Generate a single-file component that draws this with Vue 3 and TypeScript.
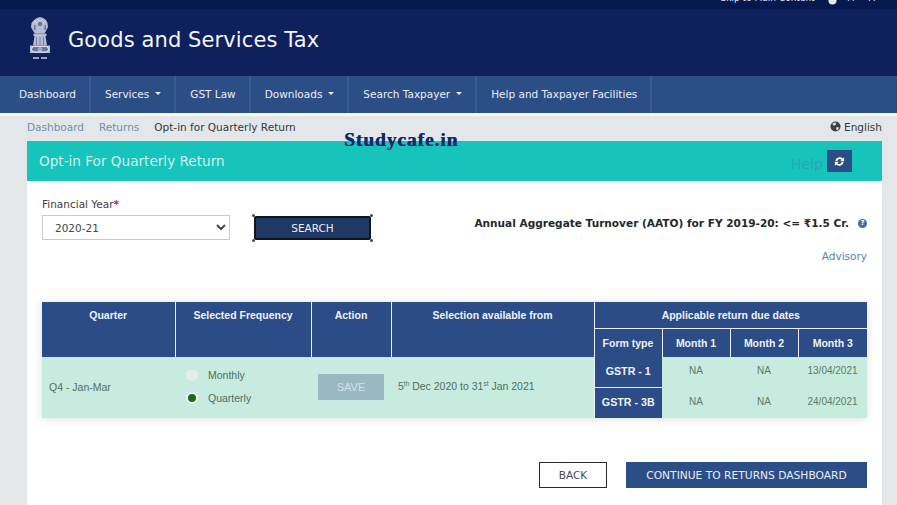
<template>
  <div class="page">
    <div class="topbar">
      <span class="skip">Skip to Main Content</span>
      <svg class="contrast" viewBox="0 0 10 10"><circle cx="5" cy="5" r="4.5" fill="#e8ecf4" /></svg>
      <span class="skip a-large">A</span>
      <span class="skip a-small">A</span>
    </div>

    <header class="masthead">
      <svg class="emblem" viewBox="0 0 22 43" aria-hidden="true">
        <g fill="#b4bdd2">
          <path d="M5 3 8 1l3-1 3 1 3 2 1.500 3 .5 4-1.500 3-2 3.500H6L3.500 13 2 10l.5-4z" />
          <path d="M4.500 16.500h13V19h-13z" />
          <path d="M5.500 19h11l1 6.500.5 3H4l.5-3z" />
          <path d="M1 28.500h20v7.500H1z" />
        </g>
        <g fill="#6a779c">
          <circle cx="11" cy="7" r="2.200" />
          <path d="M5 8h1.500v5H5zM15.500 8H17v5h-1.500z" />
          <path d="M7 20h.8v8H7zM10.600 20h.8v8h-.8zM14.200 20h.8v8h-.8z" />
          <rect x="3" y="30" width="16" height="4.500" rx="2" />
        </g>
        <g fill="none" stroke="#e3e7f0" stroke-width=".9">
          <rect x="2.500" y="29.500" width="17" height="5.500" rx="2.500" />
          <circle cx="11" cy="32.300" r="1.500" />
          <path d="M6 4l2 2M16 4l-2 2M9 2.500l1 1.500M13 2.500 12 4" />
        </g>
        <path d="M4 40h6v2H4zM12 40h6v2h-6z" fill="#98a4c0" />
      </svg>
      <span class="site-title">Goods and Services Tax</span>
    </header>

    <nav class="mainnav">
      <a v-for="item in navItems" :key="item.label" class="nav-item">
        {{ item.label }}<i v-if="item.caret" class="caret"></i>
      </a>
    </nav>

    <main class="content">
      <div class="crumbs">
        <div class="crumb-list">
          <a>Dashboard</a>
          <a>Returns</a>
          <span>Opt-in for Quarterly Return</span>
        </div>
        <div class="lang">
          <svg viewBox="0 0 12 12" width="11" height="11">
            <circle cx="6" cy="6" r="5.500" fill="#3a3f44" />
            <path d="M3 2.500 6 1.500 7 3.500 5 5 3 4.500zM7 6.500l3 .5-1.500 3-2-1z" fill="#d8dcdf" />
          </svg>
          <span>English</span>
        </div>
      </div>

      <section class="card">
        <div class="card-head">
          <h1>Opt-in For Quarterly Return</h1>
          <div class="head-tools">
            <span class="help">Help</span>
            <button class="refresh" type="button" aria-label="Refresh">
              <svg viewBox="0 0 12 12" width="11" height="11">
                <path d="M1.500 5.500a4.600 4.600 0 0 1 8-2.700L11 1.500v4.200H6.800L8.300 4.200a2.700 2.700 0 0 0-4.700 1.300zM10.500 6.500a4.600 4.600 0 0 1-8 2.700L1 10.500V6.300h4.200L3.700 7.800a2.700 2.700 0 0 0 4.700-1.300z" fill="#fff" />
              </svg>
            </button>
          </div>
        </div>

        <div class="card-body">
          <div class="filter-row">
            <div class="field">
              <label>Financial Year<b>*</b></label>
              <select class="year">
                <option>2020-21</option>
              </select>
            </div>
            <button class="search" type="button">
              <i class="hd tl"></i><i class="hd tr"></i><i class="hd bl"></i><i class="hd br"></i>
              SEARCH
            </button>
            <div class="aato">
              <span>Annual Aggregate Turnover (AATO) for FY 2019-20: &lt;= ₹1.5 Cr.</span>
              <i class="info">?</i>
            </div>
          </div>

          <a class="advisory">Advisory</a>

          <div class="table-wrap">
            <table>
              <colgroup>
                <col v-for="w in colWidths" :key="w.id" :style="{ width: w.px + 'px' }" />
              </colgroup>
              <thead>
                <tr>
                  <th rowspan="2" class="top">Quarter</th>
                  <th rowspan="2" class="top">Selected Frequency</th>
                  <th rowspan="2" class="top">Action</th>
                  <th rowspan="2" class="top">Selection available from</th>
                  <th colspan="4" class="group">Applicable return due dates</th>
                </tr>
                <tr>
                  <th class="sub">Form type</th>
                  <th class="sub">Month 1</th>
                  <th class="sub">Month 2</th>
                  <th class="sub">Month 3</th>
                </tr>
              </thead>
              <tbody>
                <tr v-for="(form, i) in forms" :key="form.name">
                  <template v-if="i === 0">
                    <td rowspan="2" class="quarter">Q4 - Jan-Mar</td>
                    <td rowspan="2" class="freq-cell">
                      <div class="freq">
                        <div class="freq-row"><i class="radio off"></i>Monthly</div>
                        <div class="freq-row"><i class="radio on"></i>Quarterly</div>
                      </div>
                    </td>
                    <td rowspan="2" class="center save-cell"><span class="save">SAVE</span></td>
                    <td rowspan="2" class="window">5<sup>th</sup> Dec 2020 to 31<sup>st</sup> Jan 2021</td>
                  </template>
                  <th class="form">{{ form.name }}</th>
                  <td class="center">NA</td>
                  <td class="center">NA</td>
                  <td class="center">{{ form.due }}</td>
                </tr>
              </tbody>
            </table>
          </div>

          <div class="actions">
            <button class="back" type="button">BACK</button>
            <button class="continue" type="button">CONTINUE TO RETURNS DASHBOARD</button>
          </div>
        </div>
      </section>

      <div class="watermark">Studycafe.in</div>
    </main>
  </div>
</template>

<script setup lang="ts">
const navItems = [
  { label: 'Dashboard', caret: false },
  { label: 'Services', caret: true },
  { label: 'GST Law', caret: false },
  { label: 'Downloads', caret: true },
  { label: 'Search Taxpayer', caret: true },
  { label: 'Help and Taxpayer Facilities', caret: false }
]

const colWidths = [
  { id: 'quarter', px: 133 },
  { id: 'freq', px: 136 },
  { id: 'action', px: 80 },
  { id: 'window', px: 203 },
  { id: 'form', px: 68 },
  { id: 'm1', px: 68 },
  { id: 'm2', px: 68 },
  { id: 'm3', px: 69 }
]

const forms = [
  { name: 'GSTR - 1', due: '13/04/2021' },
  { name: 'GSTR - 3B', due: '24/04/2021' }
]
</script>

<style>
html, body { margin: 0; background: #e4e7e9; overflow: hidden; }
</style>

<style scoped>
.page {
  width: 897px;
  height: 505px;
  overflow: hidden;
  font-family: "DejaVu Sans", sans-serif;
}

.topbar {
  height: 9px;
  background: #06194f;
  display: flex;
  justify-content: flex-end;
  align-items: flex-end;
  gap: 13px;
  padding-right: 22px;
  overflow: hidden;
}
.skip {
  color: #e6e9f2;
  font-size: 9px;
  line-height: 13px;
  margin-bottom: 4px;
  flex: none;
}
.a-large { margin-left: -2px; }
.a-small { margin-left: 2px; }
.contrast { width: 9px; height: 9px; margin-bottom: 4px; flex: none; }

.masthead {
  height: 67px;
  background: #0f215d;
  display: flex;
  align-items: center;
  padding-left: 29px;
  gap: 17px;
}
.emblem { width: 22px; height: 43px; margin-top: -8px; }
.site-title {
  color: #f2f5fa;
  font-size: 21px;
  margin-top: -5px;
  letter-spacing: 0.1px;
}

.mainnav {
  height: 37px;
  background: #2c4e86;
  display: flex;
}
.nav-item {
  display: flex;
  align-items: center;
  padding: 0 13px 2px 14px;
  color: #e8edf5;
  font-size: 10.5px;
  border-right: 2px solid #3a5a90;
}
.nav-item:first-child { padding-left: 19px; }
.caret {
  width: 0;
  height: 0;
  margin-left: 6px;
  border: 3px solid transparent;
  border-top-color: #e8edf5;
  border-bottom: 0;
}

.content {
  position: relative;
  background: #e4e7e9;
  border-top: 3px solid #f4f7fb;
  padding: 0 15px 0 27px;
  height: 389px;
}

.crumbs {
  height: 25px;
  box-sizing: border-box;
  padding-bottom: 4px;
  display: flex;
  justify-content: space-between;
  align-items: center;
  font-size: 10.5px;
  color: #33383d;
}
.crumb-list { display: flex; gap: 15px; }
.crumb-list a { color: #6f8fae; }
.lang { display: flex; align-items: center; gap: 3px; }

.card { background: #fff; height: 364px; }
.card-head {
  height: 40px;
  background: #17c4bb;
  display: flex;
  align-items: center;
  justify-content: space-between;
  padding: 0 30px 0 12px;
}
.card-head h1 {
  margin: 0;
  font-size: 13.6px;
  font-weight: 400;
  color: #cdf2ee;
}
.head-tools { display: flex; align-items: center; gap: 4px; }
.help { color: #2aa6b8; font-size: 14px; margin-top: 6px; }
.refresh {
  width: 25px;
  height: 22px;
  padding: 0;
  border: 0;
  background: #2c4e86;
  display: grid;
  place-items: center;
}

.card-body { padding: 0 15px; }
.filter-row { display: flex; align-items: flex-end; height: 59px; }
.field { display: flex; flex-direction: column; gap: 5px; width: 188px; }
.field label { font-size: 10.5px; color: #3c4146; }
.field b { color: #c4202a; }
.year {
  height: 25px;
  width: 188px;
  padding-left: 8px;
  font: 10.5px "DejaVu Sans", sans-serif;
  color: #41464b;
  background: #fff;
  border: 1px solid #c9cccf;
  border-radius: 0;
}
.search {
  position: relative;
  width: 117px;
  height: 24px;
  margin-left: 24px;
  background: #1f3864;
  color: #eaeef5;
  border: 2px solid #10151f;
  border-radius: 2px;
  font: 10.5px "DejaVu Sans", sans-serif;
  padding: 0;
}
.hd {
  position: absolute;
  width: 3px;
  height: 3px;
  background: #4a4a4a;
  border-radius: 50%;
}
.tl { left: -4px; top: -4px; }
.tr { right: -4px; top: -4px; }
.bl { left: -4px; bottom: -4px; }
.br { right: -4px; bottom: -4px; }

.aato {
  margin-left: auto;
  display: flex;
  align-items: center;
  gap: 9px;
  height: 24px;
  padding-bottom: 10px;
  font-size: 10.56px;
  font-weight: 700;
  color: #24282c;
  box-sizing: border-box;
}
.info {
  width: 9px;
  height: 9px;
  border-radius: 50%;
  background: #3f6fa8;
  color: #fff;
  font-size: 7px;
  font-style: normal;
  line-height: 9px;
  text-align: center;
}

.advisory {
  display: block;
  text-align: right;
  margin-top: 9px;
  font-size: 10.5px;
  line-height: 14px;
  color: #5a83a8;
}

.table-wrap {
  margin-top: 39px;
  box-shadow: 0 1px 8px rgba(40, 50, 70, 0.16);
}
table {
  width: 825px;
  table-layout: fixed;
  border-collapse: collapse;
  font-family: "Liberation Sans", sans-serif;
  font-size: 10px;
}
th {
  background: #2b4c86;
  color: #eef2f8;
  font-size: 10.5px;
  font-weight: 700;
  padding: 0;
  border: 0 solid #eaf0f6;
  border-left-width: 1px;
}
tr:first-child > th:first-child { border-left-width: 0; }
th.top { vertical-align: top; padding-top: 7px; }
th.group { height: 26px; border-bottom-width: 1px; }
th.sub { height: 27px; padding-bottom: 1px; }
th.form { height: 28px; font-size: 10.7px; border-left-width: 1px; padding-bottom: 2px; }
tbody tr:first-child th.form { border-bottom-width: 1px; }
td {
  background: #c8ebdf;
  color: #5a7a68;
  font-size: 10px;
  padding: 0 0 3px;
}
.center { text-align: center; }
.quarter, .window {
  padding: 0 0 2px 7px;
  font-size: 10.5px;
  color: #4f6f5e;
}
.window { padding-bottom: 4px; }
sup { font-size: 6.5px; line-height: 0; }
.freq-cell { padding-bottom: 2px; }
.freq { display: flex; flex-direction: column; gap: 9px; padding-left: 11px; }
.freq-row { display: flex; align-items: center; gap: 10px; height: 14px; font-size: 10.5px; color: #4f6f5e; }
.radio {
  width: 12px;
  height: 12px;
  box-sizing: border-box;
  border-radius: 50%;
  background: #e4efea;
}
.radio.on { border: 2.5px solid #eef6f2; background: #1c6a20; }
.save-cell { padding-bottom: 2px; }
.save {
  display: inline-block;
  width: 66px;
  line-height: 26px;
  background: #9ab8c2;
  color: #cfe0e4;
  font-size: 11px;
}

.actions {
  display: flex;
  justify-content: flex-end;
  gap: 19px;
  margin-top: 44px;
}
.actions button {
  height: 26px;
  padding: 0;
  font: 10.5px "DejaVu Sans", sans-serif;
}
.back {
  width: 68px;
  background: #fff;
  border: 1px solid #2a2a2a;
  color: #45494d;
}
.actions .continue {
  width: 241px;
  background: #2c4e86;
  border: 0;
  color: #e8edf5;
  font-size: 10.7px;
}

.watermark {
  position: absolute;
  left: 344px;
  top: 13px;
  font: 700 19.5px "Liberation Serif", serif;
  letter-spacing: 0.9px;
  color: #142a6b;
  text-shadow: 0.4px 0 0 #142a6b;
}
</style>
